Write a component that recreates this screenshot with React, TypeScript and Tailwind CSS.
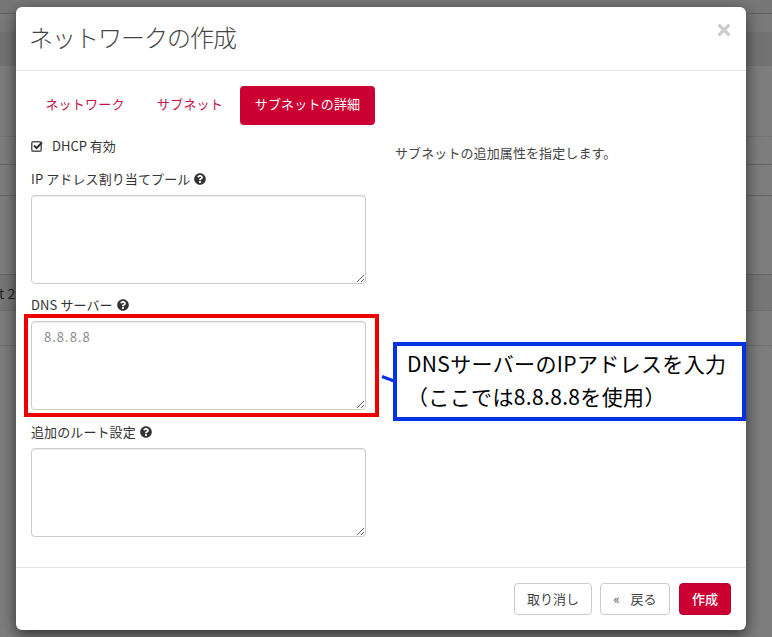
import { FaQuestionCircle, FaTimes } from 'react-icons/fa'

const jp = 'font-["Noto_Sans_CJK_JP","Noto_Sans",sans-serif]'

function Help() {
  return <FaQuestionCircle className="inline-block ml-[4px] w-[12px] h-[12px] text-[#333] align-[-1px]" />
}

function Field({ label, placeholder, className }: { label: string; placeholder?: string; className?: string }) {
  return (
    <div className={className}>
      <label className="block h-[19px] leading-[18px] text-[13px] tracking-[0.1px] text-[#333]">
        {label}
        <Help />
      </label>
      <textarea
        placeholder={placeholder}
        className="block mt-[6px] w-[335px] h-[89px] px-[12px] py-[5px] text-[13px] leading-[20px] tracking-[1px] bg-white border border-[#ccc] rounded-[4px] shadow-[inset_0_1px_1px_rgba(0,0,0,0.075)] placeholder:text-[#8c8c8c] outline-none"
      />
    </div>
  )
}

export default function App() {
  return (
    <div className={`relative w-[772px] h-[637px] overflow-hidden bg-[#7d7d7d] ${jp}`}>
      {/* dimmed page behind the modal */}
      <div className="flex flex-col text-[14px] text-[#222]">
        <div className="h-[14px] bg-[#777] border-b border-[#626262]" />
        <div className="h-[18px] bg-[#7a7a7a]" />
        <div className="h-[34px] bg-[#737373]" />
        <div className="h-[71px] border-b border-[#727272]" />
        <div className="h-[28px] border-b border-[#666]" />
        <div className="h-[31px] border-b border-[#666]" />
        <div className="h-[79px] border-b border-[#666]" />
        <div className="h-[36px] flex items-center bg-[#767676] border-b border-[#6f6f6f] leading-none">
          <span className="text-[14px] -ml-[1px]">t 2</span>
        </div>
        <div className="h-[35px] border-b border-[#6f6f6f]" />
      </div>

      {/* modal */}
      <div className="absolute left-[16px] top-[7px] w-[730px] h-[623px] flex flex-col bg-white rounded-[6px] shadow-[0_5px_15px_rgba(0,0,0,0.6)]">
        <div className="relative h-[64px] shrink-0 border-b border-[#e5e5e5] pl-[13px] pb-[4px] flex items-center">
          <h4 className="text-[24px] font-light leading-none text-[#444] tracking-[-1px]">ネットワークの作成</h4>
          <FaTimes className="absolute right-[13px] top-[14px] w-[18px] h-[18px] text-[#ccc]" />
        </div>

        <div className="flex-1 px-[14px] pt-[15px]">
          <div className="flex gap-[2px] text-[13px] leading-[16px] tracking-[0.2px] text-center">
            <a className="w-[110px] py-[10px] h-[39px] text-[#c4114a]">ネットワーク</a>
            <a className="w-[96px] py-[10px] h-[39px] text-[#c4114a]">サブネット</a>
            <a className="w-[135px] py-[10px] h-[39px] text-white bg-[#cc0033] rounded-[4px]">サブネットの詳細</a>
          </div>

          <div className="flex mt-[11px]">
            <div className="w-[365px] pl-[1px] shrink-0">
              <div className="flex items-center h-[20px] text-[13px] text-[#333]">
                <svg width="13" height="12" viewBox="0 0 13 12" className="shrink-0">
                  <rect x="0.75" y="1.75" width="9.5" height="9.5" rx="1.5" fill="none" stroke="#555" strokeWidth="1.5" />
                  <path d="M3 5.5 L5.5 8 L11 2.5" fill="none" stroke="#333" strokeWidth="2" />
                </svg>
                <span className="ml-[8px]">DHCP 有効</span>
              </div>
              <Field className="mt-[14px]" label="IP アドレス割り当てプール" />
              <Field className="mt-[12px]" label="DNS サーバー" placeholder="8.8.8.8" />
              <Field className="mt-[13px]" label="追加のルート設定" />
            </div>
            <p className="text-[13px] leading-[18px] tracking-[0.1px] text-[#444] pt-[8px]">サブネットの追加属性を指定します。</p>
          </div>
        </div>

        <div className="h-[63px] shrink-0 border-t border-[#e5e5e5] flex items-start justify-end pt-[15px] pr-[15px] text-[13px] leading-[18px]">
          <button className="w-[78px] h-[32px] bg-white border border-[#ccc] rounded-[4px] text-[#444]">取り消し</button>
          <button className="ml-[8px] w-[70px] h-[32px] bg-white border border-[#ccc] rounded-[4px] text-[#444]">
            <span className="mr-[11px] text-[#555]">«</span>戻る
          </button>
          <button className="ml-[9px] w-[52px] h-[32px] bg-[#cc0033] border border-[#b8002e] rounded-[4px] font-medium text-white">作成</button>
        </div>
      </div>

      {/* annotations drawn on top of the screenshot */}
      <div className="absolute left-[24px] top-[314px] w-[355px] h-[103px] border-[4px] border-[#ee0000]" />
      <svg className="absolute left-[379px] top-[372px]" width="16" height="12" viewBox="0 0 16 12">
        <path d="M3 4.5 L15 9" stroke="#0033e6" strokeWidth="3" fill="none" />
      </svg>
      <div className="absolute left-[393px] top-[342px] w-[353px] h-[79px] border-[4px] border-[#0033e6] bg-white pl-[10px] pt-[1px] text-[21px] leading-[33px] tracking-[0.35px] text-black">
        <div>DNSサーバーのIPアドレスを入力</div>
        <div>（ここでは8.8.8.8を使用）</div>
      </div>
    </div>
  )
}
